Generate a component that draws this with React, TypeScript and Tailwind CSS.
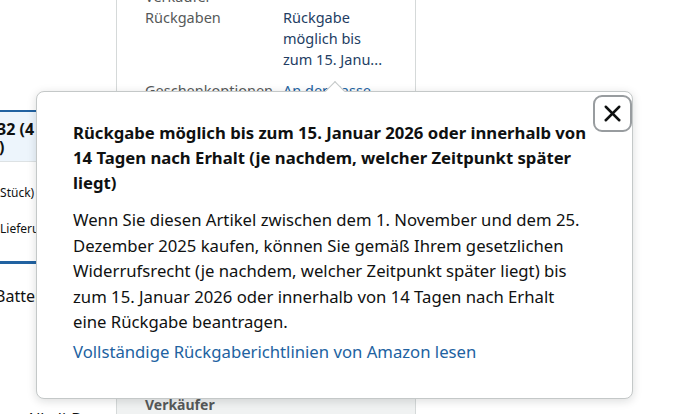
import { X } from "lucide-react";

const Row = ({ label, children, className = "" }: { label: string; children?: React.ReactNode; className?: string }) => (
  <div className={`grid grid-cols-[138px_1fr] ${className}`}>
    <span className="text-[#565959]">{label}</span>
    <div>{children}</div>
  </div>
);

export default function App() {
  return (
    <div className="relative w-[690px] h-[414px] overflow-hidden bg-white font-['Noto_Sans',Arial,sans-serif] text-[#0f1111]">
      <div className="flex h-full">
        {/* left column: selected pack card */}
        <div className="w-[116px] shrink-0">
          <div className="mt-[110px] border-t-2 border-b-[3px] border-[#2162a1]">
            <div className="h-[50px] bg-[#edf5fc] border-b border-[#dde2e4] pt-[8px] text-[16px] font-bold leading-[18px]">
              <p className="whitespace-nowrap -ml-[3px]">32 (4 Stück</p>
              <p className="-ml-[1px]">)</p>
            </div>
            <div className="h-[99px] pt-[22px] text-[12px] leading-[18px]">
              <p className="whitespace-nowrap -ml-[48px]">(0,58 € / Stück)</p>
              <p className="mt-[18px] whitespace-nowrap">Lieferung morgen</p>
            </div>
          </div>
          <p className="mt-[20px] whitespace-nowrap -ml-[5px] text-[16px] leading-[24px]">Batterien</p>
          <p className="mt-[99px] whitespace-nowrap ml-[26px] text-[16px] leading-[24px]">Alkali-Batterien</p>
        </div>

        {/* middle column: offer details */}
        <div className="w-[300px] h-full flex flex-col border-x border-[#d5d9d9]">
          <div className="pl-[28px] -mt-[35px] text-[14.5px] leading-[21px]">
            <Row label="Versand durch Verkäufer">
              <span className="text-[#0f1111]">Amazon</span>
            </Row>
            <Row label="Rückgaben">
              <span className="block w-[106px] text-[#233d63]">Rückgabe möglich bis zum 15. Janu...</span>
            </Row>
            <Row label="Geschenkoptionen" className="mt-[10px]">
              <span className="text-[#2162a1]">An der Kasse</span>
            </Row>
            <Row label="Zahlung" className="mt-[10px]">
              <span className="text-[#2162a1]">Sichere Transaktion</span>
            </Row>
          </div>
          <div className="mt-auto h-[24px] bg-[#f0f2f2] pt-[4px] pl-[28px] text-[14px] leading-[21px] font-bold text-[#565959]">
            Verkäufer
          </div>
        </div>
      </div>

      {/* return policy popover */}
      <div className="absolute left-[36px] top-[91px] w-[597px] rounded-[8px] border border-[#c4c8c8] bg-white shadow-[0_2px_10px_rgba(15,17,17,0.15)]">
        <div className="absolute -top-[8px] left-[291px] w-[14px] h-[14px] rotate-45 border-l border-t border-[#c4c8c8] bg-white" />
        <button className="absolute top-[3px] right-0 flex w-[39px] h-[37px] items-center justify-center rounded-[9px] border-2 border-[#989c9f] bg-white text-[#0f1111]">
          <X size={27} strokeWidth={2.2} />
        </button>
        <div className="pl-9 pr-[44px] pt-7 pb-[34px]">
          <h2 className="text-[16.7px] font-bold leading-[25px]">
            Rückgabe möglich bis zum 15. Januar 2026 oder innerhalb von 14 Tagen nach Erhalt (je nachdem, welcher Zeitpunkt später liegt)
          </h2>
          <p className="mt-3 text-[16.7px] leading-[25.5px]">
            Wenn Sie diesen Artikel zwischen dem 1. November und dem 25. Dezember 2025 kaufen, können Sie gemäß Ihrem gesetzlichen Widerrufsrecht (je nachdem, welcher Zeitpunkt später liegt) bis zum 15. Januar 2026 oder innerhalb von 14 Tagen nach Erhalt eine Rückgabe beantragen.
          </p>
          <a href="#" className="mt-1 block text-[16.7px] leading-[25px] text-[#2162a1]">
            Vollständige Rückgaberichtlinien von Amazon lesen
          </a>
        </div>
      </div>
    </div>
  );
}
